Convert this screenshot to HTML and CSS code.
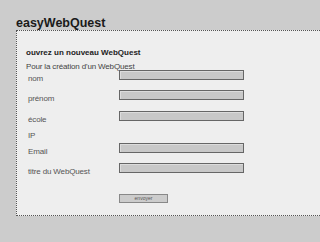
FILE: index.html
```html
<!DOCTYPE html>
<html lang="fr">
<head>
    <meta charset="UTF-8">
    <meta name="viewport" content="width=device-width, initial-scale=1.0">
    <title>easyWebQuest</title>
    <link rel="stylesheet" href="styles.css">
</head>
<body>
    <h1 class="logo">easyWebQuest</h1>
    <div class="panel">
        <p class="lead">ouvrez un nouveau WebQuest</p>
        <p class="sub">Pour la création d'un WebQuest</p>
        <form id="wqForm">
            <div class="row">
                <label for="nom">nom</label>
                <input type="text" id="nom">
            </div>
            <div class="row">
                <label for="prenom">prénom</label>
                <input type="text" id="prenom">
            </div>
            <div class="row">
                <label for="ecole">école</label>
                <input type="text" id="ecole">
            </div>
            <div class="row row-plain">
                <label>IP</label>
            </div>
            <div class="row">
                <label for="email">Email</label>
                <input type="text" id="email">
            </div>
            <div class="row">
                <label for="titre">titre du WebQuest</label>
                <input type="text" id="titre">
            </div>
            <div class="row row-submit">
                <button type="button">envoyer</button>
            </div>
        </form>
    </div>
</body>
</html>
```

FILE: styles.css
```css
body {
    margin: 0;
    background-color: #cccccc;
    font-family: "Liberation Sans", Arial, sans-serif;
    color: #333;
}
.logo {
    margin: 0;
    padding: 17px 0 0 16px;
    font-size: 12.5px;
    line-height: 13px;
    font-weight: bold;
    color: #1a1a1a;
}
.panel {
    margin-left: 16px;
    padding: 17px 0 9px 9px;
    background-color: #eeeeee;
    border: 1px dotted #555;
    border-right: none;
}
.lead {
    margin: 0;
    font-size: 8px;
    line-height: 9px;
    font-weight: bold;
    color: #222;
}
.sub {
    margin: 6px 0 0 0;
    font-size: 8px;
    line-height: 8px;
    letter-spacing: -0.15px;
    color: #444;
}
form {
    margin-top: -1.5px;
}
.row {
    display: flex;
    align-items: center;
    margin-bottom: 2.5px;
}
.row label {
    width: 93px;
    padding-left: 2px;
    box-sizing: border-box;
    font-size: 8px;
    line-height: 10px;
    letter-spacing: -0.15px;
    color: #555;
}
.row input {
    width: 125px;
    height: 10px;
    margin: 0 0 8px 0;
    padding: 0;
    box-sizing: border-box;
    border: 1px solid #666;
    background-color: #c8c8c8;
    box-shadow: inset 1px 1px 0 #dcdcdc;
}
.row-plain {
    margin-bottom: 1.5px;
}
.row-submit {
    margin-top: 13px;
    padding-left: 93px;
}
button {
    width: 49px;
    height: 9px;
    padding: 0;
    border: 1px solid #888;
    background-color: #cccccc;
    font-family: "Liberation Sans", Arial, sans-serif;
    font-size: 5px;
    line-height: 7px;
    color: #555;
}
```
